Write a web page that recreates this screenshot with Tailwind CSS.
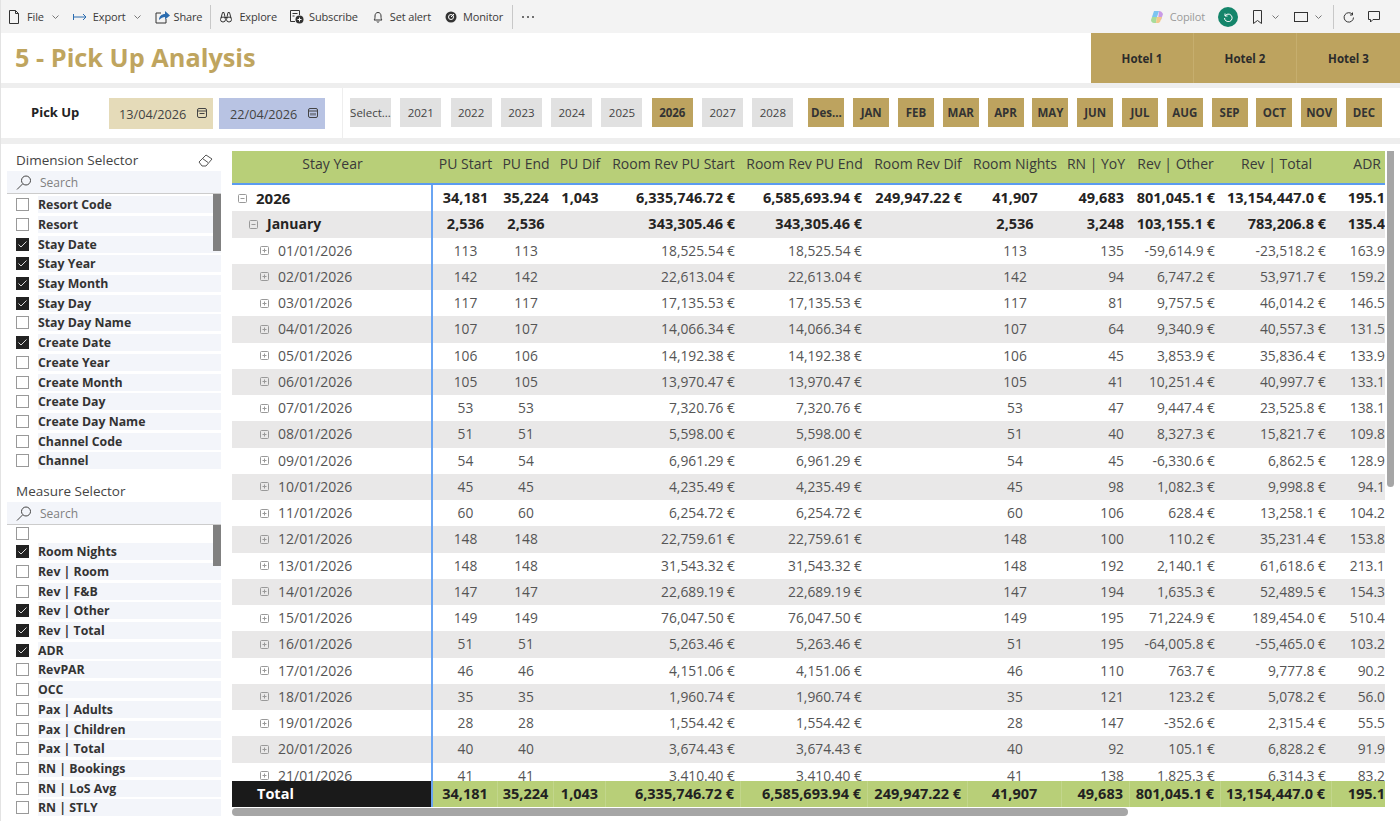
<!DOCTYPE html>
<html lang="en">
<head>
    <meta charset="UTF-8">
    <meta name="viewport" content="width=device-width, initial-scale=1.0">
    <title>5 - Pick Up Analysis</title>
    <script src="https://cdn.jsdelivr.net/npm/@tailwindcss/browser@4"></script>
</head>
<body class="w-[1400px] h-[821px] overflow-hidden bg-white font-['Open_Sans',sans-serif] text-[#333]">
<div class="h-full flex flex-col border-l-2 border-[#e3e3e3] -ml-px">

    <!-- top toolbar -->
    <div class="h-[33px] shrink-0 bg-[#f3f3f3] flex items-center text-[11px] tracking-[-0.15px] text-[#3b3a39] pl-[8px] pt-px">
        <svg class="w-[10px] h-[14px] mr-[8px]" viewBox="0 0 10 14" fill="none" stroke="#333"><path d="M.5.5h6l3 3v10H.5z M6.5.5v3h3"/></svg>
        <span>File</span>
        <svg class="w-[7px] h-[4px] ml-[8px] mr-[14px]" viewBox="0 0 7 4" fill="none" stroke="#777"><path d="M.5.5l3 3 3-3"/></svg>
        <svg class="w-[14px] h-[8px] mr-[6px]" viewBox="0 0 14 8" fill="none" stroke="#2b6cb0"><path d="M.5 1v6M1 4h12M10 1l3 3-3 3"/></svg>
        <span>Export</span>
        <svg class="w-[7px] h-[4px] ml-[8px] mr-[14px]" viewBox="0 0 7 4" fill="none" stroke="#777"><path d="M.5.5l3 3 3-3"/></svg>
        <svg class="w-[15px] h-[14px] mr-[4px]" viewBox="0 0 15 14" fill="none"><path d="M6 3H1v10h10V9" stroke="#333"/><path d="M4 10c0-4 3-6 6-6V1l5 4.500-5 4V7C8 7 6 8 4 10z" fill="#2b6cb0"/></svg>
        <span>Share</span>
        <span class="w-px h-[24px] bg-[#c8c8c8] mx-[8px]"></span>
        <svg class="w-[12px] h-[12px] ml-[1px] mr-[7px]" viewBox="0 0 12 12" fill="none" stroke="#333"><circle cx="3" cy="8.500" r="2.500"/><circle cx="9" cy="8.500" r="2.500"/><path d="M1 7l1.500-5.500h1.500L5 6M11 7L9.500 1.500H8L7 6M5 6.500h2"/></svg>
        <span>Explore</span>
        <svg class="w-[14px] h-[14px] ml-[13px] mr-[5px]" viewBox="0 0 14 14" fill="none"><path d="M5 11.500H.5v-11h9V5M2.500 3.500h5M2.500 6h2" stroke="#333"/><circle cx="9.500" cy="9.500" r="4" fill="#333"/><path d="M9.500 7.500v4M7.500 9.500h4" stroke="#fff"/></svg>
        <span>Subscribe</span>
        <svg class="w-[10px] h-[11px] ml-[15px] mr-[7px]" viewBox="0 0 10 11" fill="none" stroke="#333"><path d="M1 8c1-1 1-2 1-4s1-3.500 3-3.500S8 2 8 4s0 3 1 4zM4 9.500c0 1 2 1 2 0"/></svg>
        <span>Set alert</span>
        <svg class="w-[12px] h-[12px] ml-[14px] mr-[6px]" viewBox="0 0 12 12"><circle cx="6" cy="6" r="5.500" fill="#333"/><circle cx="6" cy="6" r="2.500" fill="none" stroke="#fff"/><path d="M6 6l3-3" stroke="#fff"/></svg>
        <span>Monitor</span>
        <span class="w-px h-[24px] bg-[#c8c8c8] ml-[9px] mr-[9px]"></span>
        <span class="flex gap-[3px]"><i class="w-[2px] h-[2px] bg-[#444] rounded-full"></i><i class="w-[2px] h-[2px] bg-[#444] rounded-full"></i><i class="w-[2px] h-[2px] bg-[#444] rounded-full"></i></span>

        <div class="ml-auto flex items-center pr-[20px]">
            <svg class="w-[14px] h-[14px] mr-[6px]" viewBox="0 0 14 14"><path d="M4 1h5L7 7H2z" fill="#7cc4f0"/><path d="M9 1c2 0 3 1 4 3l-2 6H8z" fill="#c99ae6"/><path d="M2 7h5l-1 6H4C2 13 1 11 1 10z" fill="#a8dc9a"/><path d="M7 7h5l-2 5c-1 1-2 1-4 1z" fill="#f3c98b"/></svg>
            <span class="text-[#9a9a9a] mr-[13px]">Copilot</span>
            <span class="w-[20px] h-[20px] rounded-full bg-[#14856a] flex items-center justify-center mr-[15px]">
                <svg class="w-[10px] h-[10px]" viewBox="0 0 10 10" fill="none" stroke="#fff"><path d="M2 1.500v2.500h2.500M2 4a3.800 3.800 0 1 1-.5 2"/></svg>
            </span>
            <svg class="w-[9px] h-[14px] mr-[10px]" viewBox="0 0 9 14" fill="none" stroke="#333"><path d="M.5.500h8v13l-4-3-4 3z"/></svg>
            <svg class="w-[7px] h-[4px] mr-[15px]" viewBox="0 0 7 4" fill="none" stroke="#777"><path d="M.5.5l3 3 3-3"/></svg>
            <svg class="w-[14px] h-[10px] mr-[7px]" viewBox="0 0 14 10" fill="none" stroke="#333"><rect x=".5" y=".5" width="13" height="9"/></svg>
            <svg class="w-[7px] h-[4px]" viewBox="0 0 7 4" fill="none" stroke="#777"><path d="M.5.5l3 3 3-3"/></svg>
            <span class="w-px h-[24px] bg-[#c8c8c8] ml-[11px] mr-[9px]"></span>
            <svg class="w-[11px] h-[11px] mr-[14px]" viewBox="0 0 11 11" fill="none" stroke="#333"><path d="M9.500 2.500a4.700 4.700 0 1 0 1 3M9.500.5v2.500H7"/></svg>
            <svg class="w-[12px] h-[12px]" viewBox="0 0 12 12" fill="none" stroke="#333"><path d="M.5.500h11v8H5L2.500 11V8.500h-2z"/></svg>
        </div>
    </div>

    <!-- title row -->
    <div class="h-[50px] shrink-0 flex items-center justify-between">
        <h1 class="pl-[14px] text-[25.300px] font-bold text-[#bfa55f] leading-none">5 - Pick Up Analysis</h1>
        <div class="h-full w-[309px] bg-[#bda35f] grid grid-cols-3 text-[11.500px] font-bold text-[#2b2b2b] divide-x divide-[#c6ae6e]">
            <div class="flex items-center justify-center pt-px">Hotel 1</div>
            <div class="flex items-center justify-center pt-px">Hotel 2</div>
            <div class="flex items-center justify-center pt-px">Hotel 3</div>
        </div>
    </div>
    <div class="h-[5px] shrink-0 bg-[#eeeeee]"></div>

    <!-- filter row -->
    <div class="h-[50px] shrink-0 flex">
        <div class="w-[342px] flex items-start pt-[10px] border-r border-[#eeeeee]">
            <span class="w-[108px] pl-[30px] pt-[5px] text-[13px] font-bold text-[#222]">Pick Up</span>
            <div class="w-[104px] h-[31px] bg-[#e5dbb9] flex items-center justify-between pl-[10px] pr-[6px] pt-[3px] text-[12.700px] text-[#444]">13/04/2026
                <svg class="w-[10px] h-[10px] -mt-[5px]" viewBox="0 0 10 10" fill="none" stroke="#444"><rect x=".5" y=".5" width="9" height="9" rx="1.500"/><path d="M.5 3h9M2.500 5.500h5"/></svg>
            </div>
            <div class="w-[106px] h-[31px] ml-[6px] bg-[#b8c3e3] flex items-center justify-between pl-[11px] pr-[7px] pt-[3px] text-[12.700px] text-[#444]">22/04/2026
                <svg class="w-[10px] h-[10px] -mt-[5px]" viewBox="0 0 10 10" fill="none" stroke="#444"><rect x=".5" y=".5" width="9" height="9" rx="1.500"/><path d="M.5 3h9M3 5v2.500M5 5v2.500M7 5v2.500"/></svg>
            </div>
        </div>
        <div id="years" class="pl-[7px] pt-[10px] flex gap-[9.300px] text-[11.500px] text-[#444]"></div>
        <div id="months" class="ml-[15px] pt-[10px] flex gap-[8.800px] text-[11.500px] font-bold text-[#333]"></div>
    </div>
    <div class="h-[6px] shrink-0 bg-[#eeeeee]"></div>

    <!-- main -->
    <div class="flex-1 flex min-h-0">
        <!-- slicers -->
        <div class="w-[230px] shrink-0 pl-[6px] pr-[10px]">
            <div class="h-[27px] flex items-center justify-between pl-[9px] pr-[8px] pt-[5px] text-[13.500px] text-[#444]">Dimension Selector
                <svg class="w-[15px] h-[13px]" viewBox="0 0 15 13" fill="none" stroke="#555"><path d="M1 8l7-7 6 4-6 7H4z M4.500 4.500l5.500 4"/></svg>
            </div>
            <div class="h-[23px] flex items-center pl-[9px] pt-px bg-[#f3f5fa] border-b border-[#cccccc] text-[12px] text-[#808080]">
                <svg class="w-[16px] h-[15px] mr-[8px]" viewBox="0 0 16 15" fill="none" stroke="#444"><circle cx="10" cy="5.500" r="4.500"/><path d="M6.500 9L1 14.500"/></svg>Search
            </div>
            <div id="dimList" class="relative h-[277px] pt-[1px] overflow-hidden">
                <div class="absolute right-0 top-0 w-[8px] h-[57px] bg-[#808080]"></div>
            </div>
            <div class="h-[28px] flex items-center pl-[9px] pt-[13px] text-[13.500px] text-[#444]">Measure Selector</div>
            <div class="h-[23px] mt-[3px] flex items-center pl-[9px] pt-px bg-[#f3f5fa] border-b border-[#cccccc] text-[12px] text-[#808080]">
                <svg class="w-[16px] h-[15px] mr-[8px]" viewBox="0 0 16 15" fill="none" stroke="#444"><circle cx="10" cy="5.500" r="4.500"/><path d="M6.500 9L1 14.500"/></svg>Search
            </div>
            <div id="measList" class="relative h-[300px] pt-px overflow-hidden">
                <div class="absolute right-0 top-0 w-[8px] h-[41px] bg-[#808080]"></div>
                <div class="h-[16px] pl-[9px] pt-[1px]"><span class="block w-[13px] h-[13px] border border-[#999] bg-white"></span></div>
            </div>
        </div>

        <!-- matrix -->
        <div class="flex-1 pt-[7px] pl-[1px] flex min-w-0">
            <div class="w-[1153px] shrink-0">
                <div id="head" class="h-[34px] grid grid-cols-[201px_65px_56px_52px_135px_127px_100px_94px_68px_91px_111px_53px] bg-[#b8cf78] border-b-2 border-[#5b9bf0] text-[14px] text-[#3a3a3a] leading-[25px]"></div>
                <div id="rows" class="h-[596px] overflow-hidden text-[13.800px] text-[#555]"></div>
                <div id="total" class="h-[26px] grid grid-cols-[201px_65px_56px_52px_135px_127px_100px_94px_68px_91px_111px_53px] bg-[#b8cf78] divide-x divide-white/15 text-[14.500px] font-bold text-[#222] leading-[26px]"></div>
                <div class="w-[896px] h-[8px] mt-[1px] rounded-full bg-[#a6a6a6]"></div>
            </div>
            <div class="w-[7px] h-[336px] ml-[2px] rounded-b-full rounded-t-sm bg-[#a6a6a6]"></div>
        </div>
    </div>
</div>

<script>
    // slicer buttons
    const years = ['Select...', '2021', '2022', '2023', '2024', '2025', '2026', '2027', '2028'];
    document.getElementById('years').innerHTML = years.map(y => y === '2026'
        ? `<div class="w-[41px] h-[29px] flex items-center justify-center bg-[#bda35f] font-bold text-[#333]">${y}</div>`
        : `<div class="w-[41px] h-[29px] flex items-center justify-center bg-[#e1e1e1] whitespace-nowrap">${y}</div>`).join('');

    const months = ['Des...', 'JAN', 'FEB', 'MAR', 'APR', 'MAY', 'JUN', 'JUL', 'AUG', 'SEP', 'OCT', 'NOV', 'DEC'];
    document.getElementById('months').innerHTML = months.map(m =>
        `<div class="w-[36px] h-[29px] flex items-center justify-center bg-[#bda35f]">${m}</div>`).join('');

    // selector lists
    function listRow(label, checked) {
        const box = checked
            ? `<span class="w-[13px] h-[13px] bg-[#222] flex items-center justify-center"><svg class="w-[9px] h-[7px]" viewBox="0 0 9 7" fill="none" stroke="#ddd"><path d="M.5 3.500l2.500 2.500 5.500-5.500"/></svg></span>`
            : `<span class="w-[13px] h-[13px] border border-[#999] bg-white"></span>`;
        return `<div class="h-[19.700px] flex items-center pl-[9px]">${box}<span class="ml-[9px] flex-1 h-[17px] bg-[#f3f5fa] text-[12.300px] font-bold text-[#333] leading-[17px]">${label}</span></div>`;
    }
    const dimensions = [['Resort Code'], ['Resort'], ['Stay Date', 1], ['Stay Year', 1], ['Stay Month', 1], ['Stay Day', 1],
        ['Stay Day Name'], ['Create Date', 1], ['Create Year'], ['Create Month'], ['Create Day'], ['Create Day Name'], ['Channel Code'], ['Channel']];
    const measures = [['Room Nights', 1], ['Rev | Room'], ['Rev | F&amp;B'], ['Rev | Other', 1], ['Rev | Total', 1], ['ADR', 1], ['RevPAR'], ['OCC'],
        ['Pax | Adults'], ['Pax | Children'], ['Pax | Total'], ['RN | Bookings'], ['RN | LoS Avg'], ['RN | STLY']];
    document.getElementById('dimList').insertAdjacentHTML('beforeend', dimensions.map(d => listRow(d[0], d[1])).join(''));
    document.getElementById('measList').insertAdjacentHTML('beforeend', measures.map(d => listRow(d[0], d[1])).join(''));

    // matrix
    const COLS = 'grid grid-cols-[201px_65px_56px_52px_135px_127px_100px_94px_68px_91px_111px_53px]';
    const headers = ['Stay Year', 'PU Start', 'PU End', 'PU Dif', 'Room Rev PU Start', 'Room Rev PU End', 'Room Rev Dif', 'Room Nights', 'RN | YoY', 'Rev | Other', 'Rev | Total', 'ADR'];
    const centered = [1, 2, 3, 7];

    function cell(text, i) {
        if (i === 11) return `<div class="text-right whitespace-nowrap">${text}</div>`;
        if (centered.includes(i)) return `<div class="text-center whitespace-nowrap">${text}</div>`;
        return `<div class="text-right pr-[6px] whitespace-nowrap">${text}</div>`;
    }

    document.getElementById('head').innerHTML = headers.map((h, i) => i === 11
        ? `<div class="text-right pr-[4px] whitespace-nowrap">${h}</div>`
        : `<div class="text-center whitespace-nowrap">${h}</div>`).join('');

    const minus = `<svg class="w-[9px] h-[9px] shrink-0" viewBox="0 0 9 9" fill="none" stroke="#999"><rect x=".5" y=".5" width="8" height="8" rx="1"/><path d="M2.500 4.500h4"/></svg>`;
    const plus = `<svg class="w-[9px] h-[9px] shrink-0" viewBox="0 0 9 9" fill="none" stroke="#999"><rect x=".5" y=".5" width="8" height="8" rx="1"/><path d="M2.500 4.500h4M4.500 2.500v4"/></svg>`;

    const e = v => v + ' €';
    const data = [
        ['01/01/2026', 113, '18,525.54', 135, '-59,614.9', '-23,518.2', '163.9'],
        ['02/01/2026', 142, '22,613.04', 94, '6,747.2', '53,971.7', '159.2'],
        ['03/01/2026', 117, '17,135.53', 81, '9,757.5', '46,014.2', '146.5'],
        ['04/01/2026', 107, '14,066.34', 64, '9,340.9', '40,557.3', '131.5'],
        ['05/01/2026', 106, '14,192.38', 45, '3,853.9', '35,836.4', '133.9'],
        ['06/01/2026', 105, '13,970.47', 41, '10,251.4', '40,997.7', '133.1'],
        ['07/01/2026', 53, '7,320.76', 47, '9,447.4', '23,525.8', '138.1'],
        ['08/01/2026', 51, '5,598.00', 40, '8,327.3', '15,821.7', '109.8'],
        ['09/01/2026', 54, '6,961.29', 45, '-6,330.6', '6,862.5', '128.9'],
        ['10/01/2026', 45, '4,235.49', 98, '1,082.3', '9,998.8', '94.1'],
        ['11/01/2026', 60, '6,254.72', 106, '628.4', '13,258.1', '104.2'],
        ['12/01/2026', 148, '22,759.61', 100, '110.2', '35,231.4', '153.8'],
        ['13/01/2026', 148, '31,543.32', 192, '2,140.1', '61,618.6', '213.1'],
        ['14/01/2026', 147, '22,689.19', 194, '1,635.3', '52,489.5', '154.3'],
        ['15/01/2026', 149, '76,047.50', 195, '71,224.9', '189,454.0', '510.4'],
        ['16/01/2026', 51, '5,263.46', 195, '-64,005.8', '-55,465.0', '103.2'],
        ['17/01/2026', 46, '4,151.06', 110, '763.7', '9,777.8', '90.2'],
        ['18/01/2026', 35, '1,960.74', 121, '123.2', '5,078.2', '56.0'],
        ['19/01/2026', 28, '1,554.42', 147, '-352.6', '2,315.4', '55.5'],
        ['20/01/2026', 40, '3,674.43', 92, '105.1', '6,828.2', '91.9'],
        ['21/01/2026', 41, '3,410.40', 138, '1,825.3', '6,314.3', '83.2'],
    ];

    let html = '';
    html += `<div class="${COLS} h-[26.250px] leading-[26px] bg-white text-[14.500px] font-bold text-[#252423]">
        <div class="flex items-center gap-[9px] pl-[6px] text-[15px] border-r-2 border-[#6aa5f2]">${minus}2026</div>` +
        ['34,181', '35,224', '1,043', '6,335,746.72 €', '6,585,693.94 €', '249,947.22 €', '41,907', '49,683', '801,045.1 €', '13,154,447.0 €', '195.1'].map((v, i) => cell(v, i + 1)).join('') + `</div>`;
    html += `<div class="${COLS} h-[26.250px] leading-[26px] bg-[#e9e8e8] text-[14.500px] font-bold text-[#252423]">
        <div class="flex items-center gap-[9px] pl-[17px] text-[14px] border-r-2 border-[#6aa5f2]">${minus}January</div>` +
        ['2,536', '2,536', '', '343,305.46 €', '343,305.46 €', '', '2,536', '3,248', '103,155.1 €', '783,206.8 €', '135.4'].map((v, i) => cell(v, i + 1)).join('') + `</div>`;
    data.forEach((r, n) => {
        const values = [r[1], r[1], '', e(r[2]), e(r[2]), '', r[1], r[3], e(r[4]), e(r[5]), r[6]];
        const bg = n % 2 ? 'bg-[#e9e8e8]' : 'bg-white';
        html += `<div class="${COLS} h-[26.250px] leading-[26px] ${bg}">
            <div class="flex items-center gap-[9px] pl-[28px] text-[14px] border-r-2 border-[#6aa5f2]">${plus}${r[0]}</div>` +
            values.map((v, i) => cell(v, i + 1)).join('') + `</div>`;
    });
    document.getElementById('rows').innerHTML = html;

    document.getElementById('total').innerHTML =
        `<div class="bg-[#1a1a1a] text-white pl-[25px] border-r-2 border-[#6aa5f2]">Total</div>` +
        ['34,181', '35,224', '1,043', '6,335,746.72 €', '6,585,693.94 €', '249,947.22 €', '41,907', '49,683', '801,045.1 €', '13,154,447.0 €', '195.1'].map((v, i) => cell(v, i + 1)).join('');
</script>
</body>
</html>
